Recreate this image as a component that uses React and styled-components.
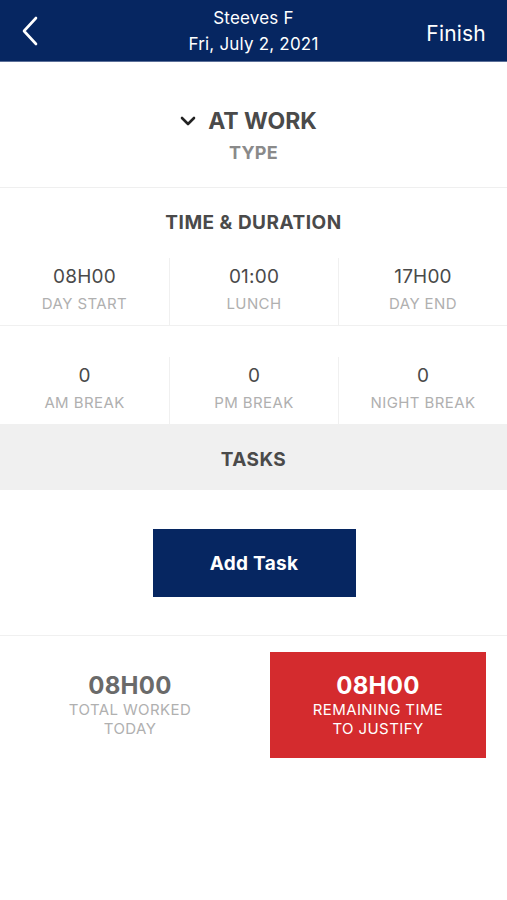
import React from "react";
import styled, { createGlobalStyle } from "styled-components";

const GlobalStyle = createGlobalStyle`
  body {
    margin: 0;
    background: #fff;
    font-family: Inter, "Noto Sans", sans-serif;
  }
`;

const Page = styled.div`
  width: 507px;
  min-height: 900px;
  background: #fff;
`;

const Header = styled.div`
  height: 61px;
  background: #062661;
  border-bottom: 1px solid #5b6f98;
  display: grid;
  grid-template-columns: 90px 1fr 90px;
  align-items: center;
  color: #fff;
`;

const Back = styled.div`
  padding-left: 20px;
  display: flex;
  align-items: center;
`;

const HeaderTitle = styled.div`
  text-align: center;
  font-size: 17px;
  line-height: 26px;
  letter-spacing: 0.2px;
`;

const Finish = styled.div`
  text-align: right;
  padding: 5px 21px 0 0;
  font-size: 21px;
  letter-spacing: 0.2px;
`;

const TypeBlock = styled.div`
  padding: 45px 0 23px;
  border-bottom: 1px solid #efefef;
  text-align: center;
`;

const TypeValue = styled.div`
  display: flex;
  justify-content: center;
  align-items: center;
  gap: 12px;
  font-size: 23px;
  line-height: 28px;
  font-weight: 700;
  color: #4a4a4a;
  margin-right: 10px;
`;

const TypeLabel = styled.div`
  margin-top: 7px;
  font-size: 18px;
  line-height: 22px;
  font-weight: 700;
  color: #8a8a8a;
  letter-spacing: 0.3px;
`;

const SectionTitle = styled.div`
  padding: 23px 0 23px;
  text-align: center;
  font-size: 19px;
  line-height: 24px;
  font-weight: 700;
  color: #4a4a4a;
  letter-spacing: 0.5px;
`;

const Row = styled.div`
  display: grid;
  grid-template-columns: repeat(3, 1fr);
  padding-top: ${(p) => p.$top || 0}px;
  border-bottom: ${(p) => (p.$line ? "1px solid #f0f0f0" : "none")};
`;

const Cell = styled.div`
  padding: 8px 0 12px;
  text-align: center;
  border-left: ${(p) => (p.$first ? "none" : "1px solid #f0f0f0")};
`;

const Value = styled.div`
  font-size: 19px;
  line-height: 22px;
  color: #4a4a4a;
  letter-spacing: 0.2px;
`;

const Label = styled.div`
  margin-top: 7px;
  font-size: 15px;
  line-height: 18px;
  color: #b0b0b0;
  letter-spacing: 0.4px;
`;

const TasksBand = styled.div`
  height: 66px;
  box-sizing: border-box;
  padding-top: 5px;
  background: #f0f0f0;
  display: flex;
  align-items: center;
  justify-content: center;
  font-size: 19px;
  font-weight: 700;
  color: #4a4a4a;
  letter-spacing: 0.4px;
`;

const ButtonWrap = styled.div`
  display: flex;
  justify-content: center;
  padding: 39px 0 38px;
  border-bottom: 1px solid #f0f0f0;
`;

const AddButton = styled.button`
  width: 203px;
  height: 68px;
  margin-left: 1px;
  background: #062661;
  border: none;
  color: #fff;
  font-family: inherit;
  font-size: 19px;
  font-weight: 700;
  letter-spacing: 0.3px;
`;

const Totals = styled.div`
  display: grid;
  grid-template-columns: 1fr 216px;
  gap: 10px;
  padding: 16px 21px 0 0;
`;

const Total = styled.div`
  height: 106px;
  display: flex;
  flex-direction: column;
  align-items: center;
  justify-content: center;
  text-align: center;
  background: ${(p) => (p.$alert ? "#d42b2e" : "transparent")};
`;

const TotalValue = styled.div`
  font-size: 24px;
  line-height: 28px;
  font-weight: 700;
  color: ${(p) => (p.$alert ? "#fff" : "#6a6a6a")};
  letter-spacing: 0.3px;
`;

const TotalLabel = styled.div`
  font-size: 15px;
  line-height: 19px;
  color: ${(p) => (p.$alert ? "#fff" : "#b0b0b0")};
  letter-spacing: 0.4px;
`;

const times = [
  { value: "08H00", label: "DAY START" },
  { value: "01:00", label: "LUNCH" },
  { value: "17H00", label: "DAY END" },
];

const breaks = [
  { value: "0", label: "AM BREAK" },
  { value: "0", label: "PM BREAK" },
  { value: "0", label: "NIGHT BREAK" },
];

export default function App() {
  return (
    <Page>
      <GlobalStyle />
      <Header>
        <Back>
          <svg width="20" height="30" viewBox="0 0 20 30">
            <path
              d="M16 2 L4 15 L16 28"
              fill="none"
              stroke="#fff"
              strokeWidth="2.6"
              strokeLinecap="round"
              strokeLinejoin="round"
            />
          </svg>
        </Back>
        <HeaderTitle>
          Steeves F
          <br />
          Fri, July 2, 2021
        </HeaderTitle>
        <Finish>Finish</Finish>
      </Header>

      <TypeBlock>
        <TypeValue>
          <svg width="16" height="10" viewBox="0 0 16 10">
            <path
              d="M2 2 L8 8 L14 2"
              fill="none"
              stroke="#222"
              strokeWidth="2.6"
              strokeLinecap="round"
              strokeLinejoin="round"
            />
          </svg>
          AT WORK
        </TypeValue>
        <TypeLabel>TYPE</TypeLabel>
      </TypeBlock>

      <SectionTitle>TIME &amp; DURATION</SectionTitle>

      <Row $line>
        {times.map((t, i) => (
          <Cell key={t.label} $first={i === 0}>
            <Value>{t.value}</Value>
            <Label>{t.label}</Label>
          </Cell>
        ))}
      </Row>
      <Row $top={31}>
        {breaks.map((t, i) => (
          <Cell key={t.label} $first={i === 0}>
            <Value>{t.value}</Value>
            <Label>{t.label}</Label>
          </Cell>
        ))}
      </Row>

      <TasksBand>TASKS</TasksBand>

      <ButtonWrap>
        <AddButton>Add Task</AddButton>
      </ButtonWrap>

      <Totals>
        <Total>
          <TotalValue>08H00</TotalValue>
          <TotalLabel>
            TOTAL WORKED
            <br />
            TODAY
          </TotalLabel>
        </Total>
        <Total $alert>
          <TotalValue $alert>08H00</TotalValue>
          <TotalLabel $alert>
            REMAINING TIME
            <br />
            TO JUSTIFY
          </TotalLabel>
        </Total>
      </Totals>
    </Page>
  );
}
